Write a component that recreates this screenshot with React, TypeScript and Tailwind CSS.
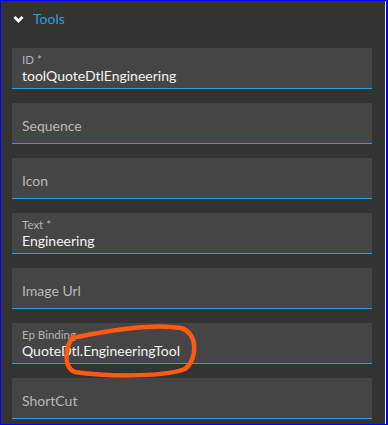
import React from 'react';

interface Field {
  label: string;
  value?: string;
  required?: boolean;
}

const fields: Field[] = [
  { label: 'ID', value: 'toolQuoteDtlEngineering', required: true },
  { label: 'Sequence' },
  { label: 'Icon' },
  { label: 'Text', value: 'Engineering', required: true },
  { label: 'Image Url' },
  { label: 'Ep Binding', value: 'QuoteDtl.EngineeringTool' },
  { label: 'ShortCut' },
];

const FieldBox: React.FC<{ field: Field }> = ({ field }) => {
  if (!field.value) {
    return (
      <div className="flex h-[41px] items-center border-b border-[#1ea3ec] bg-[#454545] pl-[10px] pt-[5px] text-[14px] text-[#b9b9b9]">
        {field.label}
      </div>
    );
  }
  return (
    <div className="flex h-[41px] flex-col border-b border-[#1ea3ec] bg-[#454545] pl-[10px] pt-[5px]">
      <span className="text-[11.5px] leading-[14px] text-[#b4b4b4]">
        {field.label}
        {field.required && ' *'}
      </span>
      <span className="text-[14px] leading-[18px] text-[#f4f4f4]">{field.value}</span>
    </div>
  );
};

export default function App() {
  return (
    <div
      className="relative h-[425px] w-[388px] border-y border-l border-r-2 border-[#0000ff] bg-[#333333]"
      style={{ fontFamily: 'Lato, "Open Sans", sans-serif' }}
    >
      <div className="h-full border-r border-white pl-[11px] pr-[13px]">
        <div className="flex h-[47px] items-start gap-[9px] pl-[1px] pt-[9px]">
          <svg width="11" height="9" viewBox="0 0 11 9" className="mt-[5px]">
            <path d="M1.5 2 L5.5 6 L9.5 2" stroke="#ffffff" strokeWidth="2.8" fill="none" />
          </svg>
          <span className="text-[14px] leading-[18px] text-[#2b9fdc]">Tools</span>
        </div>
        <div className="flex flex-col gap-[14px]">
          {fields.map(f => (
            <FieldBox key={f.label} field={f} />
          ))}
        </div>
      </div>
      <svg
        className="pointer-events-none absolute left-0 top-0"
        width="388"
        height="425"
        viewBox="0 0 388 425"
      >
        <path
          d="M76 336 C100 331 150 322 180 327 C197 332 197 358 184 368 C160 377 100 375 74 371 C62 367 64 346 72 336"
          stroke="#ff5a14"
          strokeWidth="4.5"
          fill="none"
          strokeLinecap="round"
        />
      </svg>
    </div>
  );
}
